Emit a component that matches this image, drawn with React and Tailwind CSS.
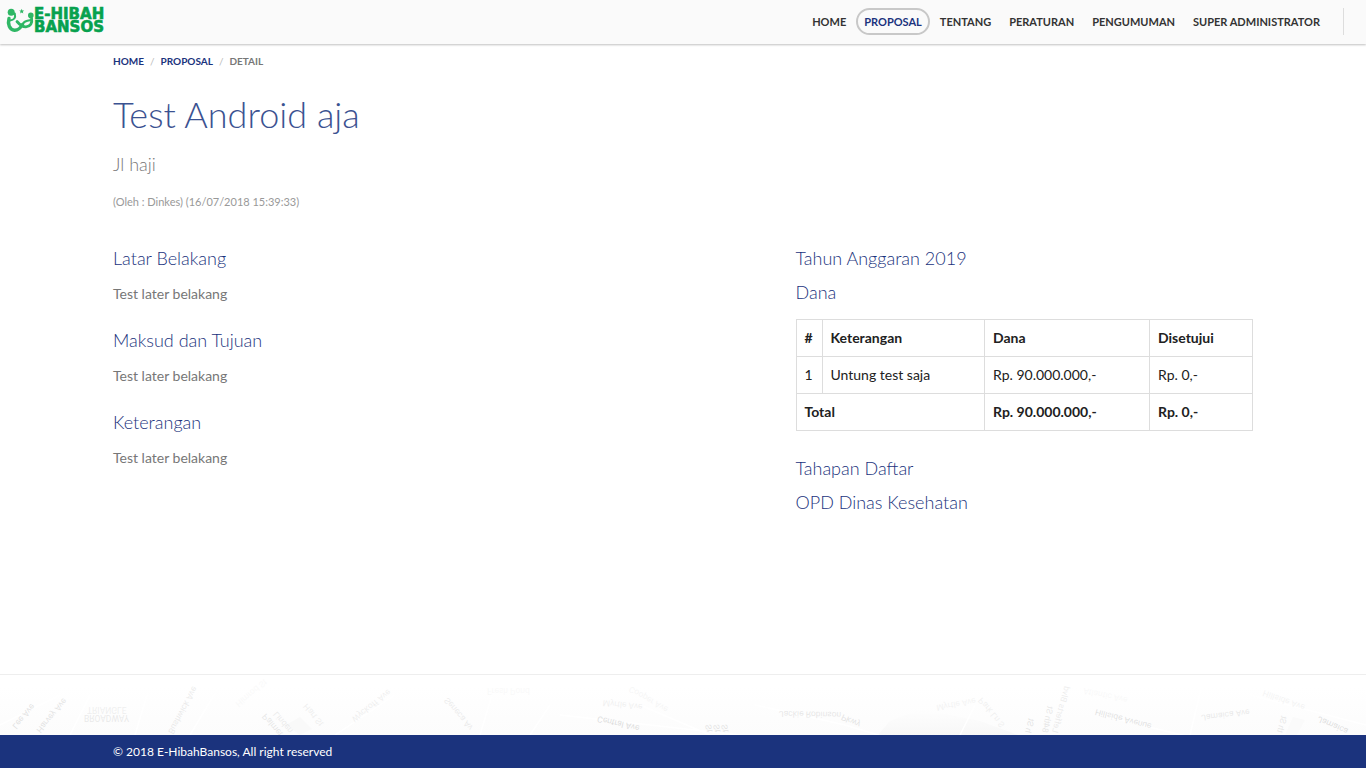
const navItems = ["Home", "Proposal", "Tentang", "Peraturan", "Pengumuman", "Super Administrator"];

const sections = [
  { title: "Latar Belakang", body: "Test later belakang" },
  { title: "Maksud dan Tujuan", body: "Test later belakang" },
  { title: "Keterangan", body: "Test later belakang" },
];

const mapLabels = [
  { text: "Lee Ave", x: 12, y: 51, angle: -50, opacity: 0.11 },
  { text: "Harvey Ave", x: 36, y: 55, angle: -50, opacity: 0.1 },
  { text: "TRIANGLE", x: 87, y: 32, angle: 0, opacity: 0.06 },
  { text: "BROADWAY", x: 84, y: 40, angle: 0, opacity: 0.08 },
  { text: "Bushwick Ave", x: 168, y: 57, angle: -62, opacity: 0.08 },
  { text: "Himrod St", x: 235, y: 28, angle: -40, opacity: 0.02 },
  { text: "Palmet", x: 266, y: 38, angle: 50, opacity: 0.09 },
  { text: "Linden", x: 277, y: 36, angle: 50, opacity: 0.07 },
  { text: "Hart St", x: 307, y: 28, angle: 50, opacity: 0.06 },
  { text: "Wyckoff Ave", x: 351, y: 43, angle: -38, opacity: 0.06 },
  { text: "Seneca Av", x: 448, y: 22, angle: 50, opacity: 0.07 },
  { text: "Fresh Pond", x: 487, y: 13, angle: 0, opacity: 0.02 },
  { text: "Myrtle Ave", x: 603, y: 25, angle: 6, opacity: 0.05 },
  { text: "Central Ave", x: 598, y: 41, angle: 13, opacity: 0.13 },
  { text: "Cooper Ave", x: 631, y: 11, angle: 30, opacity: 0.03 },
  { text: "Jackie Robinson", x: 779, y: 36, angle: 1, opacity: 0.09 },
  { text: "Pkwy", x: 843, y: 39, angle: 25, opacity: 0.1 },
  { text: "Myrtle Ave", x: 936, y: 30, angle: -10, opacity: 0.04 },
  { text: "Park Ln S", x: 982, y: 22, angle: 50, opacity: 0.05 },
  { text: "Lefferts Blvd", x: 1052, y: 57, angle: -75, opacity: 0.07 },
  { text: "84th St", x: 1042, y: 57, angle: -78, opacity: 0.09 },
  { text: "h St", x: 1025, y: 57, angle: -75, opacity: 0.1 },
  { text: "Atlantic Ave", x: 1084, y: 13, angle: 12, opacity: 0.02 },
  { text: "Hillside Avenue", x: 1096, y: 34, angle: 15, opacity: 0.11 },
  { text: "Jamaica Ave", x: 1201, y: 40, angle: -7, opacity: 0.08 },
  { text: "Hillside Ave", x: 1264, y: 15, angle: 20, opacity: 0.04 },
  { text: "Jamaica", x: 1319, y: 41, angle: 24, opacity: 0.12 },
  { text: "th St", x: 1277, y: 57, angle: -75, opacity: 0.09 },
  { text: "St", x: 711, y: 49, angle: 80, opacity: 0.1 },
  { text: "St", x: 719, y: 49, angle: 80, opacity: 0.1 },
  { text: "St", x: 727, y: 49, angle: 80, opacity: 0.1 },
];

function Logo() {
  return (
    <svg viewBox="0 0 112 44" className="h-11 w-28" role="img" aria-label="E-Hibah Bansos">
      <g fill="#2fb765">
        <circle cx="11.2" cy="12.2" r="3.5" />
        <circle cx="30.8" cy="15.4" r="2.8" />
        <path d="M21.7 8.8l.7 1.7 1.8.1-1.4 1.2.5 1.8-1.6-1-1.6 1 .5-1.8-1.4-1.2 1.8-.1z" />
      </g>
      <g fill="none" stroke="#2fb765" strokeLinecap="round">
        <path d="M9 18.500C7.400 24 9.500 29.800 14.500 30.200C18.500 30.400 20.500 28 22.500 24.500" strokeWidth="3.400" />
        <path d="M14.800 13.500C16 18 14 20 10 20.500" strokeWidth="2" />
        <path d="M17 21.500C19.500 24.500 22 27 26 26.800C30.500 26.500 32.500 23 31.600 18.500" strokeWidth="2.800" />
        <path d="M22.500 24.500C24 21.500 25.500 21 31 20" strokeWidth="2" />
      </g>
      <g
        fill="#07a14e"
        stroke="#07a14e"
        strokeWidth="0.6"
        fontFamily="DejaVu Sans, sans-serif"
        fontWeight="700"
        fontSize="15"
      >
        <text x="34" y="19">E-HIBAH</text>
        <text x="34" y="32">BANSOS</text>
      </g>
    </svg>
  );
}

function MapStrip() {
  return (
    <svg
      aria-hidden="true"
      viewBox="0 0 1366 60"
      preserveAspectRatio="xMidYMax slice"
      className="block h-15 w-full"
    >
      <defs>
        <linearGradient id="ground" x1="0" y1="0" x2="0" y2="1">
          <stop offset="0.2" stopColor="#ffffff" />
          <stop offset="1" stopColor="#fcfcfc" />
        </linearGradient>
        <linearGradient id="park" x1="0" y1="0" x2="0" y2="1">
          <stop offset="0" stopColor="#fefefe" />
          <stop offset="1" stopColor="#f7f7f7" />
        </linearGradient>
      </defs>
      <rect width="1366" height="60" fill="url(#ground)" />
      <path d="M878 60l12-14 30-12 60 12 38 14z" fill="url(#park)" />
      <path d="M286 50l14-8 12 12-12 6z" fill="#f9f9f9" />
      <path d="M1285 60l8-18 12 3-8 15z" fill="#fafafa" />
      <g fill="none" stroke="#fff" strokeWidth="1.5">
        <path d="M0 50l60-30M70 60l20-40M135 60l12-40M190 60l30-50M335 60l60-40M480 60l12-40M530 60l20-30M560 40l180 20M640 30l70 30M755 30l90 20 40 12M960 60l15-30M1100 40l90 22M1190 60l12-50M1250 20l116 30" />
      </g>
      <g fill="#000" fontFamily="Roboto, sans-serif" fontSize="8.5">
        {mapLabels.map((l, i) => (
          <text key={i} opacity={l.opacity} transform={`translate(${l.x} ${l.y}) rotate(${l.angle}) scale(1 -1)`}>
            {l.text}
          </text>
        ))}
      </g>
    </svg>
  );
}

function Heading({ children }) {
  return <h2 className="text-lg leading-5 font-light text-[#1b337d]">{children}</h2>;
}

const cell = "border border-[#ddd] p-2 text-left";

export default function App() {
  return (
    <div className="flex min-h-screen flex-col bg-white font-['Lato',sans-serif] text-sm leading-5 text-[#212121] [text-rendering:optimizeLegibility]">
      <header className="flex h-11 items-center justify-between bg-[#fafafa] pr-[22px] shadow-[0_1px_2px_rgba(0,0,0,0.25)]">
        <a href="#">
          <Logo />
        </a>
        <nav className="flex items-center pb-px">
          <ul className="flex items-center gap-0.5 pr-[15px] text-[11px] leading-[23px] font-bold uppercase">
            {navItems.map((item) => (
              <li key={item}>
                <a
                  href="#"
                  className={
                    item === "Proposal"
                      ? "block rounded-full border-2 border-[#c8c8c8] px-1.5 text-[#1b337d]"
                      : "block border-2 border-transparent px-1.5 text-[#333]"
                  }
                >
                  {item}
                </a>
              </li>
            ))}
          </ul>
          <span className="h-[27px] border-l border-[#ddd]" />
        </nav>
      </header>

      <main className="mx-auto w-full max-w-[1170px] flex-1 px-[15px]">
        <nav aria-label="Breadcrumb" className="pt-[7px]">
          <ol className="flex text-[10px] leading-5 font-bold uppercase">
            <li><a href="#" className="text-[#1b337d]">Home</a></li>
            <li className="px-1.5 font-normal text-[#bbb]" aria-hidden="true">/</li>
            <li><a href="#" className="text-[#1b337d]">Proposal</a></li>
            <li className="px-1.5 font-normal text-[#bbb]" aria-hidden="true">/</li>
            <li className="text-[#777]">Detail</li>
          </ol>
        </nav>

        <h1 className="mt-[23px] text-4xl leading-10 font-light text-[#3b5291]">Test Android aja</h1>
        <p className="mt-5 text-lg leading-5 font-light text-[#777]">Jl haji</p>
        <p className="mt-[18px] text-[11px] leading-5 text-[#999]">(Oleh : Dinkes) (16/07/2018 15:39:33)</p>

        <div className="mt-9 grid grid-cols-12 gap-x-[30px] pb-10">
          <div className="col-span-7 flex flex-col gap-[26px]">
            {sections.map((s) => (
              <section key={s.title} className="flex flex-col gap-4">
                <Heading>{s.title}</Heading>
                <p className="text-[#777]">{s.body}</p>
              </section>
            ))}
          </div>
          <div className="col-span-5 flex flex-col gap-3.5">
            <Heading>Tahun Anggaran 2019</Heading>
            <Heading>Dana</Heading>
            <table className="mt-[3px] mb-[13px] w-full border-collapse">
              <thead>
                <tr>
                  <th className={`${cell} w-[26px]`}>#</th>
                  <th className={cell}>Keterangan</th>
                  <th className={`${cell} w-[165px]`}>Dana</th>
                  <th className={`${cell} w-[103px]`}>Disetujui</th>
                </tr>
              </thead>
              <tbody>
                <tr>
                  <td className={cell}>1</td>
                  <td className={cell}>Untung test saja</td>
                  <td className={cell}>Rp. 90.000.000,-</td>
                  <td className={cell}>Rp. 0,-</td>
                </tr>
                <tr>
                  <th className={cell} colSpan={2}>Total</th>
                  <th className={cell}>Rp. 90.000.000,-</th>
                  <th className={cell}>Rp. 0,-</th>
                </tr>
              </tbody>
            </table>
            <Heading>Tahapan Daftar</Heading>
            <Heading>OPD Dinas Kesehatan</Heading>
          </div>
        </div>
      </main>

      <footer className="border-t border-[#eee]">
        <MapStrip />
        <div className="bg-[#1b337d] text-white">
          <p className="mx-auto max-w-[1170px] px-[15px] py-1.5 text-xs leading-[21px]">
            © 2018 E-HibahBansos, All right reserved
          </p>
        </div>
      </footer>
    </div>
  );
}
